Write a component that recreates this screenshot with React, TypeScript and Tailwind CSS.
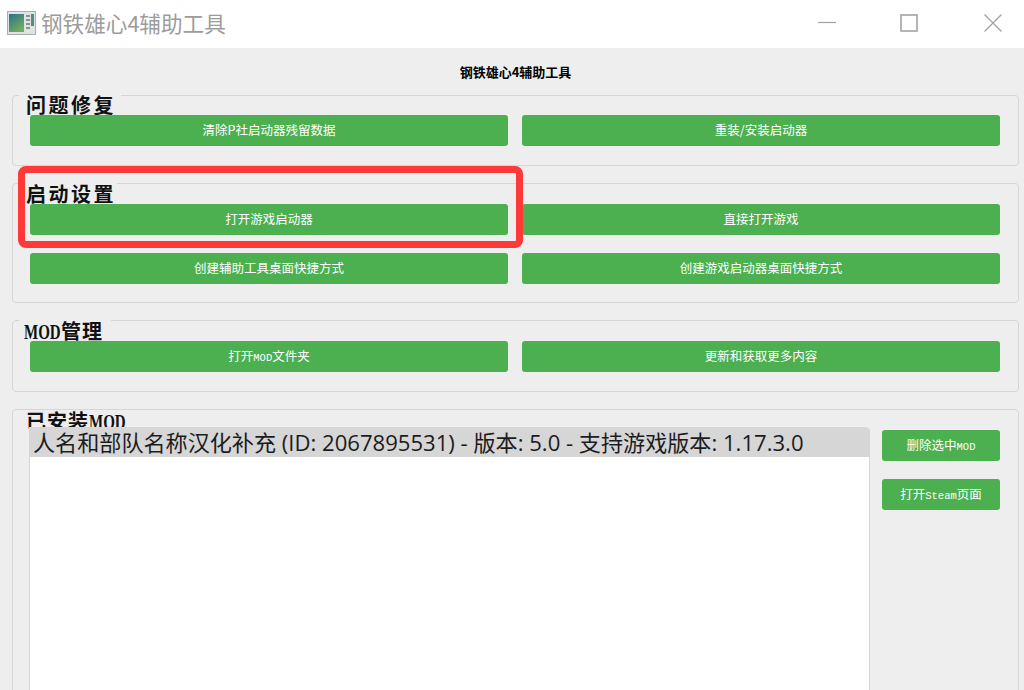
const cjkSans = "font-['Noto_Sans_CJK_SC',sans-serif]";

// half-width latin inside button labels, the CJK around it stays 12.5px
function Mono({ children }: { children: React.ReactNode }) {
  return <span className="font-['Liberation_Mono',monospace] text-[10.5px]">{children}</span>;
}

// legend latin is tall and narrow in the reference
function NarrowMod() {
  return <span className="inline-block w-[37px] origin-left scale-x-[0.75] tracking-normal">MOD</span>;
}

function GreenButton({ label, className = '' }: { label: React.ReactNode; className?: string }) {
  return (
    <button className={`relative h-[31px] rounded-[3px] bg-[#4caf50] text-[12.5px] leading-none text-white ${cjkSans} ${className}`}>
      {label}
    </button>
  );
}

function Group({ title, titleClass, children, className = '' }: { title: React.ReactNode; titleClass: string; children: React.ReactNode; className?: string }) {
  return (
    <section className={`relative rounded-[4px] border border-[#d6d6d6] pl-[17px] pr-[18px] ${className}`}>
      <h2 className={`absolute left-[6px] h-[20px] bg-[#eeeeee] text-[20px] leading-[24px] font-bold whitespace-nowrap text-[#111] font-['Liberation_Serif','Noto_Sans_CJK_SC',serif] ${titleClass}`}>
        {title}
      </h2>
      {children}
    </section>
  );
}

export default function App() {
  return (
    <div className={`h-[690px] w-[1024px] overflow-hidden bg-[#eeeeee] ${cjkSans}`}>
      {/* Title bar */}
      <header className="flex h-[48px] items-center bg-white pb-[3px] pl-[7px] pr-[22px]">
        <svg width="29" height="24" viewBox="0 0 29 24" className="shrink-0">
          <rect x="0.5" y="0.5" width="28" height="23" fill="#dfe3e3" stroke="#a9aeb0" />
          <defs>
            <linearGradient id="shot" x1="0" y1="0" x2="0.6" y2="1">
              <stop offset="0%" stopColor="#2e6f8e" />
              <stop offset="100%" stopColor="#6fae5c" />
            </linearGradient>
          </defs>
          <rect x="2" y="3" width="15" height="18" fill="url(#shot)" />
          <rect x="19" y="4" width="4" height="2" fill="#8a9296" />
          <rect x="19" y="8" width="4" height="2" fill="#8a9296" />
          <rect x="19" y="12" width="4" height="2" fill="#8a9296" />
          <rect x="19" y="16" width="4" height="2" fill="#8a9296" />
          <rect x="24" y="3" width="3" height="12" fill="#4f8f80" />
        </svg>
        <span className="ml-[5px] text-[21.6px] leading-none text-[#9c9c9c]">钢铁雄心4辅助工具</span>
        <div className="ml-auto flex items-center text-[#a3a3a3]">
          <svg width="18" height="18" viewBox="0 0 18 18"><path d="M0 8.5H18" stroke="currentColor" strokeWidth="1.2" /></svg>
          <svg width="18" height="18" viewBox="0 0 18 18" className="ml-[64px]"><rect x="1" y="1" width="16" height="16" fill="none" stroke="currentColor" strokeWidth="1.6" /></svg>
          <svg width="18" height="18" viewBox="0 0 18 18" className="ml-[66px]"><path d="M0.5 0.5L17.5 17.5M17.5 0.5L0.5 17.5" stroke="currentColor" strokeWidth="1.3" /></svg>
        </div>
      </header>

      <main className="pl-[12px] pr-[5px]">
        <h1 className="flex h-[47px] items-center justify-center text-[13px] leading-none font-bold text-black">钢铁雄心4辅助工具</h1>

        <Group title="问题修复" titleClass="-top-[2px] w-[102px] pl-[7px] tracking-[2.5px]" className="mb-[17px] h-[71px] pt-[19px]">
          <div className="grid grid-cols-2 gap-x-[14px]">
            <GreenButton label="清除P社启动器残留数据" />
            <GreenButton label="重装/安装启动器" />
          </div>
        </Group>

        <Group title="启动设置" titleClass="-top-[1px] w-[98px] pl-[7px] tracking-[2.5px]" className="mb-[17px] h-[120px] pt-[20px]">
          <div className="grid grid-cols-2 gap-x-[14px] gap-y-[18px]">
            <GreenButton label="打开游戏启动器" />
            <GreenButton label="直接打开游戏" />
            <GreenButton label="创建辅助工具桌面快捷方式" />
            <GreenButton label="创建游戏启动器桌面快捷方式" />
          </div>
        </Group>

        <Group title={<><NarrowMod />管理</>} titleClass="-top-[1px] w-[92px] pl-[5px] tracking-[1px]" className="mb-[17px] h-[72px] pt-[20px]">
          <div className="grid grid-cols-2 gap-x-[14px]">
            <GreenButton label={<>打开<Mono>MOD</Mono>文件夹</>} />
            <GreenButton label="更新和获取更多内容" />
          </div>
        </Group>

        <Group title={<>已安装<NarrowMod /></>} titleClass="top-[0px] w-[114px] pl-[7px] tracking-[1px]" className="h-[320px] pt-[17px]">
          <div className="flex">
            <div className="relative -ml-[1px] h-[300px] w-[841px] shrink-0 rounded-tr-[4px] border-x border-[#d6d6d6] bg-white">
              <div className="flex h-[30px] items-center rounded-tr-[4px] bg-[#d6d6d6] pl-[3px] font-['Open_Sans','Noto_Sans_CJK_SC',sans-serif] text-[22.1px] leading-none whitespace-nowrap text-[#1c1c1c]">
                人名和部队名称汉化补充 (ID: 2067895531) - 版本: 5.0 - 支持游戏版本: 1.17.3.0
              </div>
            </div>
            <div className="ml-[12px] flex w-[118px] flex-col gap-[18px] pt-[3px]">
              <GreenButton label={<>删除选中<Mono>MOD</Mono></>} />
              <GreenButton label={<>打开<Mono>Steam</Mono>页面</>} />
            </div>
          </div>
        </Group>
      </main>

      {/* Red annotation drawn over the screenshot */}
      <div className="absolute top-[166px] left-[18px] h-[82px] w-[505px] rounded-[8px] border-[7px] border-[#ff3838]" />
    </div>
  );
}
